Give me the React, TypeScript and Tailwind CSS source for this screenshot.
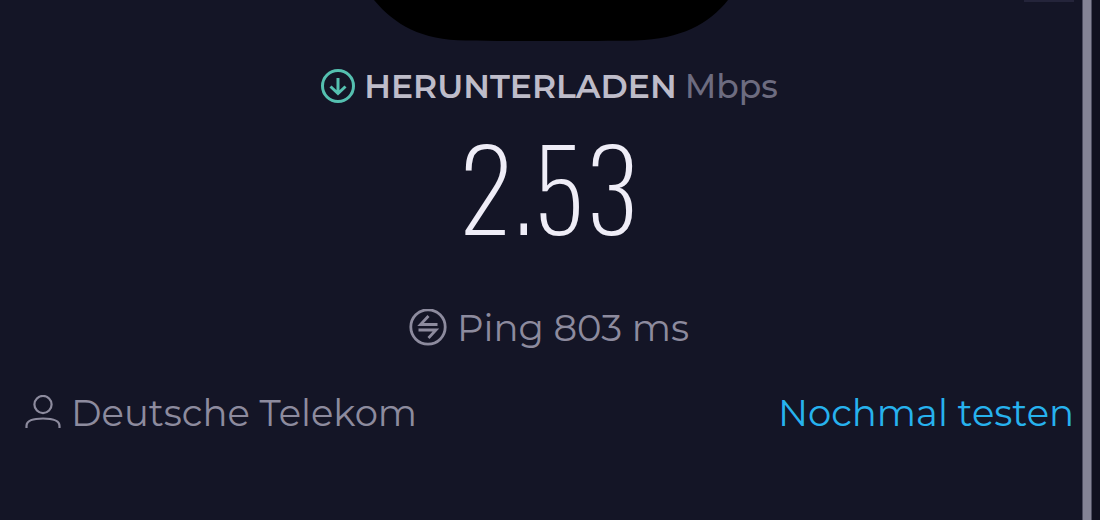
function DownloadIcon() {
  return (
    <svg viewBox="0 0 36 36" className="size-9 shrink-0 text-[#55c0b0]" fill="none" stroke="currentColor" strokeWidth="3" aria-hidden="true">
      <circle cx="18" cy="18" r="15.5" />
      <path d="M18 10V25M10.500 18.500L18 25.500L25.500 18.500" />
    </svg>
  );
}

function PingIcon() {
  return (
    <svg viewBox="0 0 38 38" className="size-[38px] shrink-0" fill="none" stroke="currentColor" strokeWidth="2.8" aria-hidden="true">
      <circle cx="19" cy="18" r="17.2" />
      <path d="M28.500 15.500H11.500L19.500 7M9.500 21H27L19.500 29" />
    </svg>
  );
}

function PersonIcon() {
  return (
    <svg viewBox="0 0 36 36" className="size-9 shrink-0" fill="none" stroke="currentColor" strokeWidth="2.2" aria-hidden="true">
      <circle cx="18" cy="9.500" r="8.600" />
      <path d="M1.500 33V31C1.500 26 8 23.500 18 23.500S34.500 26 34.500 31V33" />
    </svg>
  );
}

export default function App() {
  return (
    <div className="flex min-h-screen bg-[#141526] font-['Montserrat','Inter',sans-serif] text-[#8d8b9e]">
      <main className="relative flex min-w-0 flex-1 flex-col">
        <div className="absolute top-0 right-2 h-0.5 w-[50px] bg-[#24243a]" aria-hidden="true" />
        <div className="flex h-[42px] justify-center pl-5" aria-hidden="true">
          <svg viewBox="0 0 360 42" className="h-[42px] w-[360px]">
            <path d="M3 0C24 25 50 40 95 40.500C140 41.300 220 41.300 265 40.500C310 39 338 24 357 0Z" fill="#000" />
          </svg>
        </div>

        <section className="flex flex-col items-center pl-4">
          <h1 className="mt-6 flex h-10 items-center gap-2 text-[33px] leading-10">
            <DownloadIcon />
            <span className="font-semibold text-[#bebcc9]">HERUNTERLADEN</span>
            <span className="font-medium text-[#6d6c80]">Mbps</span>
          </h1>
          <p className="mt-4 font-['Oswald','Barlow_Condensed','Roboto_Condensed','Roboto',sans-serif] text-[110px] leading-[128px] font-extralight text-[#efedf7]">
            2.53
          </p>
          <p className="mt-[54px] flex h-12 items-center gap-2.5 text-[37px] leading-[48px]">
            <PingIcon />
            <span>Ping 803 ms</span>
          </p>
        </section>

        <footer className="mt-[37px] flex h-12 items-center justify-between pr-2 pl-[25px] text-[37px] leading-[48px]">
          <div className="flex items-center gap-2.5">
            <PersonIcon />
            <span>Deutsche Telekom</span>
          </div>
          <button type="button" className="cursor-pointer text-[#27b2ee]">Nochmal testen</button>
        </footer>
      </main>
      <div className="w-[10px] shrink-0 border-x border-[#4d4d60] bg-[#858496]" aria-hidden="true" />
      <div className="w-2 shrink-0 bg-[#111120]" aria-hidden="true" />
    </div>
  );
}
